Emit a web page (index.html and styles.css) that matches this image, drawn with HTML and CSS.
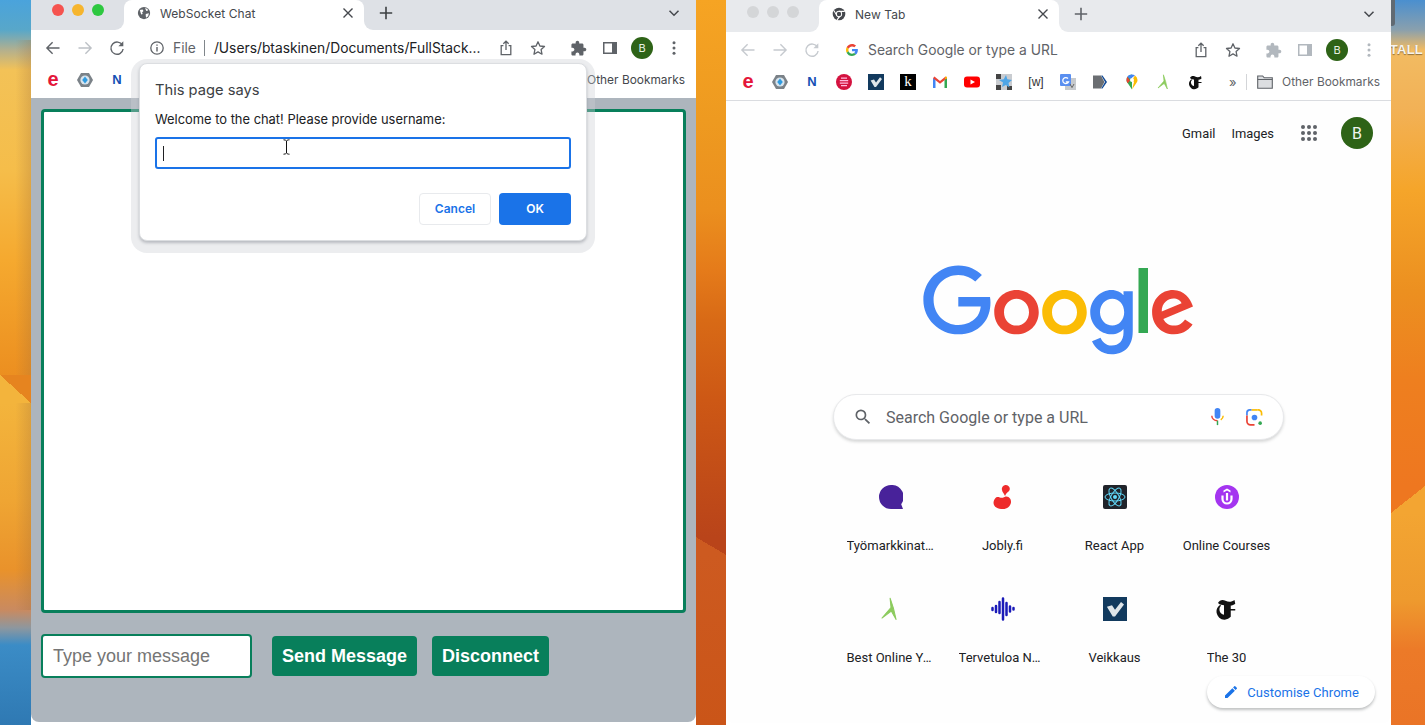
FILE: index.html
```html
<!DOCTYPE html>
<html lang="en">
<head>
<meta charset="utf-8">
<title>WebSocket Chat</title>
<link rel="stylesheet" href="styles.css">
</head>
<body>
<svg class="defs" width="0" height="0" aria-hidden="true">
  <defs>
    <symbol id="i-back" viewBox="0 0 16 16"><path d="M14.5 8H2M7.6 2.3 1.9 8l5.7 5.7" fill="none" stroke="currentColor" stroke-width="1.4"/></symbol>
    <symbol id="i-fwd" viewBox="0 0 16 16"><path d="M1.5 8H14M8.4 2.3 14.1 8l-5.7 5.7" fill="none" stroke="currentColor" stroke-width="1.4"/></symbol>
    <symbol id="i-reload" viewBox="0 0 16 16"><path d="M13.4 5.2A6.1 6.1 0 1 0 14.1 9" fill="none" stroke="currentColor" stroke-width="1.4"/><path d="M14.3 1.3v4.9H9.4z" fill="currentColor"/></symbol>
    <symbol id="i-info" viewBox="0 0 16 16"><circle cx="8" cy="8" r="6.2" fill="none" stroke="currentColor" stroke-width="1.3"/><path d="M7.3 7h1.4v4.4H7.3zM7.3 4.4h1.4v1.4H7.3z" fill="currentColor"/></symbol>
    <symbol id="i-share" viewBox="0 0 16 16"><path d="M5.4 5.6H3.2v9h9.6v-9h-2.2M8 10V1.4M5.3 3.8 8 1.2l2.7 2.6" fill="none" stroke="currentColor" stroke-width="1.3"/></symbol>
    <symbol id="i-star" viewBox="0 0 16 16"><path d="m8 1.8 1.9 4.2 4.6.5-3.4 3.1.9 4.6L8 11.9l-4 2.3.9-4.6-3.4-3.1 4.6-.5z" fill="none" stroke="currentColor" stroke-width="1.3" stroke-linejoin="round"/></symbol>
    <symbol id="i-puzzle" viewBox="0 0 24 24"><path fill="currentColor" d="M20.5 11H19V7c0-1.1-.9-2-2-2h-4V3.5C13 2.12 11.88 1 10.5 1S8 2.12 8 3.5V5H4c-1.1 0-1.99.9-1.99 2v3.8H3.5c1.49 0 2.7 1.21 2.7 2.7s-1.21 2.7-2.7 2.7H2V20c0 1.1.9 2 2 2h3.8v-1.5c0-1.49 1.21-2.7 2.7-2.7 1.49 0 2.7 1.21 2.7 2.7V22H17c1.1 0 2-.9 2-2v-4h1.5c1.38 0 2.5-1.12 2.5-2.5S21.88 11 20.5 11z"/></symbol>
    <symbol id="i-panel" viewBox="0 0 16 16"><path fill="currentColor" fill-rule="evenodd" d="M1 2h14v12H1zm1.5 1.5v9H10v-9z"/></symbol>
    <symbol id="i-dots" viewBox="0 0 16 16"><circle cx="8" cy="2.8" r="1.5" fill="currentColor"/><circle cx="8" cy="8" r="1.5" fill="currentColor"/><circle cx="8" cy="13.2" r="1.5" fill="currentColor"/></symbol>
    <symbol id="i-close" viewBox="0 0 12 12"><path d="m1.5 1.5 9 9m0-9-9 9" fill="none" stroke="currentColor" stroke-width="1.4"/></symbol>
    <symbol id="i-plus" viewBox="0 0 14 14"><path d="M7 .8v12.4M.8 7h12.4" fill="none" stroke="currentColor" stroke-width="1.6"/></symbol>
    <symbol id="i-chev" viewBox="0 0 12 12"><path d="m1.5 3.8 4.5 4.5 4.5-4.5" fill="none" stroke="currentColor" stroke-width="1.5"/></symbol>
    <symbol id="i-check" viewBox="0 0 16 16"><rect width="16" height="16" fill="#123a5e"/><path d="M2.600 6.500 6 5.500 8 8.500 12 3.300 14 5 8 13H6.500z" fill="#dfe6ea"/></symbol>
    <symbol id="i-yoga" viewBox="0 0 16 16"><path d="M7.4.8 8 7 2 14l6.2-4.6L11.4 15 9.6 7.4z" fill="#8ccb5e" stroke="#8ccb5e" stroke-width=".7" stroke-linejoin="round"/></symbol>
    <symbol id="i-nyt" viewBox="0 0 16 16"><path fill="#111" d="M2 4c1-2 3-2.500 5-1.500s4 1 6-.5l.5 2.500c-1 .8-2 1.200-3 1.200v7.500c-1 1-2.500 1.800-4 2-2.500.2-5-2-5.500-5-.2-2 .8-3.800 2.500-5l.5.7c-.8.8-1.200 1.800-1 3 .2 1.500 1.500 3 3 3V5.500C5 5.300 3.200 5.500 2 4z"/><path fill="#111" d="M10 8h3.500v1H10z"/></symbol>
    <symbol id="i-gicon" viewBox="0 0 48 48"><path fill="#EA4335" d="M24 9.5c3.5 0 6.7 1.2 9.2 3.6l6.9-6.9C35.9 2.4 30.5 0 24 0 14.6 0 6.5 5.4 2.6 13.2l8 6.2C12.4 13.7 17.700 9.5 24 9.500z"/><path fill="#4285F4" d="M47.500 24.500c0-1.600-.1-3.100-.4-4.500H24v9h12.900c-.6 3-2.200 5.500-4.800 7.200l7.700 6c4.500-4.200 7.700-10.300 7.700-17.700z"/><path fill="#FBBC05" d="M10.500 28.600c-.5-1.400-.8-3-.8-4.600s.3-3.200.8-4.600l-8-6.200C.9 16.500 0 20.100 0 24s.9 7.500 2.600 10.800z"/><path fill="#34A853" d="M24 48c6.500 0 11.900-2.100 15.900-5.800l-7.700-6c-2.200 1.500-4.900 2.300-8.200 2.300-6.300 0-11.600-4.200-13.500-9.900l-8 6.200C6.500 42.600 14.600 48 24 48z"/></symbol>
  </defs>
</svg>

<main class="desktop">
  <div class="desk-label">STALL</div>
  <div class="desk-edge"></div>

  <section class="window window-chat">
    <header class="tabstrip">
      <div class="strip-lead">
        <span class="light light-red"></span><span class="light light-yellow"></span><span class="light light-green"></span>
      </div>
      <div class="tab">
        <svg class="tab-icon" viewBox="0 0 16 16"><circle cx="8" cy="8" r="7" fill="#5f6368"/><path d="M3.200 4.600 6.400 4l1 1.800-1.600 1.600.8 1.800-1.800.4zM9.200 2.200 12 3.400l.6 1.800-2 .4zM10 9l3.600-.6-.8 3-2 2-.8-1.600z" fill="#fff"/></svg>
        <span class="tab-title">WebSocket Chat</span>
        <svg class="tab-close"><use href="#i-close"/></svg>
      </div>
      <div class="strip-rest">
        <button class="tb-btn"><svg class="ic-14"><use href="#i-plus"/></svg></button>
        <button class="tb-btn chev"><svg class="ic-12"><use href="#i-chev"/></svg></button>
      </div>
    </header>
    <div class="toolbar">
      <button class="tb-btn"><svg class="ic-16"><use href="#i-back"/></svg></button>
      <button class="tb-btn dim"><svg class="ic-16"><use href="#i-fwd"/></svg></button>
      <button class="tb-btn"><svg class="ic-16"><use href="#i-reload"/></svg></button>
      <div class="omnibox">
        <svg class="ic-16 omni-lead"><use href="#i-info"/></svg>
        <span class="omni-file">File</span>
        <span class="omni-sep"></span>
        <span class="omni-url">/Users/btaskinen/Documents/FullStack...</span>
        <button class="tb-btn"><svg class="ic-16"><use href="#i-share"/></svg></button>
        <button class="tb-btn"><svg class="ic-16"><use href="#i-star"/></svg></button>
      </div>
      <button class="tb-btn"><svg class="ic-17"><use href="#i-puzzle"/></svg></button>
      <button class="tb-btn"><svg class="ic-16"><use href="#i-panel"/></svg></button>
      <button class="tb-btn"><span class="avatar-sm">B</span></button>
      <button class="tb-btn"><svg class="ic-16"><use href="#i-dots"/></svg></button>
    </div>
    <nav class="bookmarks">
      <span class="fav"><span class="fav-e">e</span></span>
      <span class="fav"><svg class="fav-svg" viewBox="0 0 16 16"><path d="M4 1h8l4 7-4 7H4L0 8z" fill="#7b8288"/><circle cx="8" cy="8" r="4.600" fill="#d7e4ee"/><path d="M8 4.500 10.800 8 8 11.500 5.200 8z" fill="#2f9be0"/></svg></span>
      <span class="fav"><span class="fav-n">N</span></span>
      <span class="bm-other chat-other">Other Bookmarks</span>
    </nav>
    <div class="chat-page">
      <div class="chat-log"></div>
      <form class="chat-form">
        <div class="chat-input">Type your message</div>
        <button type="button" class="chat-btn">Send Message</button>
        <button type="button" class="chat-btn">Disconnect</button>
      </form>
    </div>
    <div class="prompt">
      <div class="prompt-title">This page says</div>
      <div class="prompt-msg">Welcome to the chat! Please provide username:</div>
      <div class="prompt-input"><span class="caret"></span></div>
      <div class="prompt-actions">
        <button class="prompt-cancel">Cancel</button>
        <button class="prompt-ok">OK</button>
      </div>
      <svg class="ibeam" viewBox="0 0 9 16"><path d="M1.500 .8c1.500 0 2.500.4 3 1.200.5-.8 1.500-1.200 3-1.200M4.500 2v12M1.500 15.200c1.500 0 2.500-.4 3-1.200.5.8 1.500 1.200 3 1.200" fill="none" stroke="#111" stroke-width="1"/></svg>
    </div>
  </section>

  <section class="window window-ntp">
    <header class="tabstrip tall">
      <div class="strip-lead">
        <span class="light"></span><span class="light"></span><span class="light"></span>
      </div>
      <div class="tab">
        <svg class="tab-icon" viewBox="0 0 16 16"><circle cx="8" cy="8" r="7.200" fill="#45484d"/><circle cx="8" cy="8" r="3.600" fill="#fff"/><circle cx="8" cy="8" r="2.500" fill="#45484d"/><path d="M8 4.400h6.400l.3 1.200H8zM4.900 9.800 1.600 4.300l1-.7 3.300 5.600zM9.200 11.300l-3.200 4.200-1.100-.5 3.200-5z" fill="#fff"/></svg>
        <span class="tab-title">New Tab</span>
        <svg class="tab-close"><use href="#i-close"/></svg>
      </div>
      <div class="strip-rest">
        <button class="tb-btn"><svg class="ic-14"><use href="#i-plus"/></svg></button>
        <button class="tb-btn chev"><svg class="ic-12"><use href="#i-chev"/></svg></button>
      </div>
    </header>
    <div class="toolbar">
      <button class="tb-btn faint"><svg class="ic-16"><use href="#i-back"/></svg></button>
      <button class="tb-btn faint"><svg class="ic-16"><use href="#i-fwd"/></svg></button>
      <button class="tb-btn faint"><svg class="ic-16"><use href="#i-reload"/></svg></button>
      <div class="omnibox">
        <svg class="omni-g"><use href="#i-gicon"/></svg>
        <span class="omni-search">Search Google or type a URL</span>
        <button class="tb-btn"><svg class="ic-16"><use href="#i-share"/></svg></button>
        <button class="tb-btn"><svg class="ic-16"><use href="#i-star"/></svg></button>
      </div>
      <button class="tb-btn muted"><svg class="ic-17"><use href="#i-puzzle"/></svg></button>
      <button class="tb-btn muted"><svg class="ic-16"><use href="#i-panel"/></svg></button>
      <button class="tb-btn"><span class="avatar-sm">B</span></button>
      <button class="tb-btn muted"><svg class="ic-16"><use href="#i-dots"/></svg></button>
    </div>
    <nav class="bookmarks ruled">
      <span class="fav"><span class="fav-e">e</span></span>
      <span class="fav"><svg class="fav-svg" viewBox="0 0 16 16"><path d="M4 1h8l4 7-4 7H4L0 8z" fill="#7b8288"/><circle cx="8" cy="8" r="4.600" fill="#d7e4ee"/><path d="M8 4.500 10.800 8 8 11.500 5.200 8z" fill="#2f9be0"/></svg></span>
      <span class="fav"><span class="fav-n">N</span></span>
      <span class="fav"><svg class="fav-svg" viewBox="0 0 16 16"><circle cx="8" cy="8" r="8" fill="#d4123f"/><path d="M5 3.500h6v1.300H5zM3.800 6h8.400v1.300H3.800zM3.800 8.500h8.400v1.300H3.800zM5 11h6v1.300H5z" fill="#fbd"/></svg></span>
      <span class="fav"><svg class="fav-svg"><use href="#i-check"/></svg></span>
      <span class="fav"><span class="fav-k">k</span></span>
      <span class="fav"><svg class="fav-svg" viewBox="0 0 16 16"><path d="M1 14V4l2.500 1.500V14z" fill="#4285f4"/><path d="M15 14V4l-2.500 1.500V14z" fill="#34a853"/><path d="M1 4.200 2.400 2.600 8 7l5.600-4.400L15 4.200 8 9.800z" fill="#ea4335"/><path d="M12.500 5.500 15 4.200V2.800l-1.400-.2z" fill="#fbbc05"/></svg></span>
      <span class="fav"><svg class="fav-svg" viewBox="0 0 16 16"><rect y="2.500" width="16" height="11" rx="3" fill="#f00"/><path d="m6.500 5.500 4.500 2.500-4.500 2.500z" fill="#fff"/></svg></span>
      <span class="fav"><svg class="fav-svg" viewBox="0 0 16 16"><rect width="16" height="16" fill="#c9ccd0"/><path d="M0 0h5v5H0zM0 11h5v5H0zM11 12h5v4h-5z" fill="#444"/><path d="m10 1 1.300 4.200L16 6l-3.500 3 1 4.500-3.700-2.400L6 13l1-4.500L3 6l4.800-.8z" fill="#4ea5e6"/></svg></span>
      <span class="fav"><span class="fav-w">[w]</span></span>
      <span class="fav"><svg class="fav-svg" viewBox="0 0 16 16"><rect x="5" y="4" width="11" height="12" fill="#c7cacd"/><rect width="11" height="12" rx="1" fill="#5a8ff0"/><path d="M8 4.500a3 3 0 1 0 .5 3.400H5.800" fill="none" stroke="#fff" stroke-width="1.300"/><path d="m10 10 2 3.600 2-3.600" fill="none" stroke="#666"/></svg></span>
      <span class="fav"><svg class="fav-svg" viewBox="0 0 16 16"><path d="M1 1.500h8l3.400 6.500L9 14.500H1z" fill="#6b6e72"/><path d="m10.500 1.500 4.500 6.500-4.500 6.500h-1.300L13 8 9.200 1.500z" fill="#114a96"/></svg></span>
      <span class="fav"><svg class="fav-svg" viewBox="0 0 16 16"><path d="M8 .5A5.500 5.500 0 0 0 2.500 6c0 1.400.5 2.300 1.300 3.300L8 15.500z" fill="#34a853"/><path d="M8 .5C6 .5 4.400 1.300 3.400 2.800L6 5l5-3.500A5.500 5.500 0 0 0 8 .5z" fill="#4285f4"/><path d="M2.500 6c0 1.400.5 2.300 1.300 3.300L6 6.500 3.400 2.800A5.500 5.500 0 0 0 2.500 6z" fill="#ea4335"/><path d="M11 1.500 8 6l2 2-2 7.500 4.200-6.200c.8-1 1.300-1.900 1.300-3.300a5.500 5.500 0 0 0-2.500-4.500z" fill="#fbbc05"/><circle cx="8" cy="6" r="2" fill="#fff"/></svg></span>
      <span class="fav"><svg class="fav-svg"><use href="#i-yoga"/></svg></span>
      <span class="fav"><svg class="fav-svg"><use href="#i-nyt"/></svg></span>
      <span class="bm-more">»</span>
      <span class="bm-sep"></span>
      <svg class="bm-folder" viewBox="0 0 16 14"><path d="M.7 1h5l1.500 1.800h8.100v10.400H.7z" fill="#dcdee1" stroke="#5f6368" stroke-width="1.100"/><path d="M.7 4.500h14.600" stroke="#5f6368"/></svg>
      <span class="bm-other">Other Bookmarks</span>
    </nav>
    <div class="ntp-page">
      <div class="ntp-top">
        <span class="ntp-link">Gmail</span>
        <span class="ntp-link">Images</span>
        <svg class="ntp-apps" viewBox="0 0 16 16"><g fill="#5f6368"><circle cx="2" cy="2" r="2"/><circle cx="8" cy="2" r="2"/><circle cx="14" cy="2" r="2"/><circle cx="2" cy="8" r="2"/><circle cx="8" cy="8" r="2"/><circle cx="14" cy="8" r="2"/><circle cx="2" cy="14" r="2"/><circle cx="8" cy="14" r="2"/><circle cx="14" cy="14" r="2"/></g></svg>
        <span class="avatar-lg">B</span>
      </div>
      <svg class="google-logo" viewBox="0 0 272 92" role="img" aria-label="Google">
        <path fill="#EA4335" d="M115.750 47.180c0 12.770-9.990 22.180-22.250 22.180s-22.250-9.410-22.250-22.180C71.250 34.320 81.240 25 93.500 25s22.250 9.320 22.250 22.180zm-9.740 0c0-7.980-5.790-13.440-12.510-13.440S80.990 39.200 80.990 47.180c0 7.900 5.790 13.440 12.510 13.440s12.510-5.550 12.510-13.440z"/>
        <path fill="#FBBC05" d="M163.750 47.180c0 12.770-9.990 22.180-22.250 22.180s-22.250-9.410-22.250-22.180c0-12.850 9.990-22.180 22.250-22.180s22.250 9.320 22.250 22.180zm-9.740 0c0-7.980-5.790-13.440-12.510-13.440s-12.510 5.460-12.510 13.440c0 7.900 5.790 13.440 12.510 13.440s12.510-5.550 12.510-13.440z"/>
        <path fill="#4285F4" d="M209.750 26.340v39.820c0 16.380-9.660 23.070-21.080 23.070-10.750 0-17.220-7.190-19.660-13.070l8.480-3.530c1.510 3.610 5.210 7.870 11.170 7.870 7.310 0 11.840-4.510 11.840-13v-3.190h-.34c-2.180 2.690-6.380 5.040-11.680 5.040-11.090 0-21.250-9.660-21.250-22.090 0-12.520 10.160-22.260 21.250-22.260 5.290 0 9.490 2.350 11.680 4.960h.34v-3.610h9.250zm-8.560 20.920c0-7.810-5.210-13.520-11.840-13.520-6.720 0-12.350 5.710-12.350 13.520 0 7.730 5.630 13.360 12.350 13.360 6.630 0 11.840-5.630 11.840-13.360z"/>
        <path fill="#34A853" d="M225 3v65h-9.500V3h9.500z"/>
        <path fill="#EA4335" d="M262.020 54.480l7.560 5.040c-2.440 3.610-8.320 9.830-18.480 9.830-12.600 0-22.010-9.740-22.010-22.180 0-13.190 9.490-22.180 20.920-22.180 11.510 0 17.140 9.160 18.980 14.110l1.010 2.520-29.650 12.280c2.270 4.450 5.800 6.720 10.750 6.720 4.960 0 8.400-2.440 10.920-6.140zm-23.270-7.980l19.820-8.230c-1.090-2.770-4.370-4.700-8.230-4.700-4.950 0-11.840 4.370-11.590 12.930z"/>
        <path fill="#4285F4" d="M35.290 41.410V32H67c.31 1.640.47 3.580.47 5.680 0 7.060-1.930 15.790-8.150 22.010-6.050 6.300-13.780 9.660-24.020 9.660C16.320 69.350.36 53.890.36 34.910.36 15.930 16.320.47 35.300.47c10.500 0 17.980 4.120 23.600 9.490l-6.640 6.640c-4.030-3.780-9.490-6.720-16.970-6.720-13.860 0-24.700 11.170-24.700 25.030 0 13.860 10.840 25.030 24.700 25.030 8.990 0 14.110-3.610 17.390-6.890 2.660-2.660 4.410-6.460 5.100-11.650l-22.490.01z"/>
      </svg>
      <div class="ntp-search">
        <svg class="ntp-search-ic" viewBox="0 0 24 24"><path fill="#5f6368" d="M15.500 14h-.79l-.28-.27A6.470 6.470 0 0 0 16 9.500 6.500 6.500 0 1 0 9.500 16c1.610 0 3.090-.59 4.230-1.570l.27.28v.79l5 4.990L20.490 19l-4.990-5zm-6 0C7.010 14 5 11.990 5 9.500S7.010 5 9.500 5 14 7.010 14 9.500 11.990 14 9.500 14z"/></svg>
        <span class="ntp-search-text">Search Google or type a URL</span>
        <svg class="ntp-mic" viewBox="0 0 16 22"><rect x="4.500" y="0" width="7" height="13" rx="3.500" fill="#4285f4"/><path d="M1 9.500c0 3.500 3 6 7 6" fill="none" stroke="#ea4335" stroke-width="1.800"/><path d="M15 9.500c0 2-1 3.800-3 5" fill="none" stroke="#fbbc05" stroke-width="1.800"/><path d="M8 15.500V21" stroke="#34a853" stroke-width="1.800"/></svg>
        <svg class="ntp-lens" viewBox="0 0 18 18"><path d="M1 7V4a3 3 0 0 1 3-3h2" fill="none" stroke="#4285f4" stroke-width="1.800"/><path d="M6 1h6" stroke="#fbbc05" stroke-width="1.800" fill="none"/><path d="M12 1h1a3.500 3.500 0 0 1 3.500 3.500V7" fill="none" stroke="#fbbc05" stroke-width="1.800"/><path d="M1 7v6a3.800 3.800 0 0 0 3.800 3.800H9" fill="none" stroke="#ea4335" stroke-width="1.800"/><circle cx="9" cy="9" r="3" fill="#4285f4"/><circle cx="15" cy="15" r="1.900" fill="#34a853"/></svg>
      </div>
      <div class="tiles">
        <div class="tile">
          <svg class="tile-ic" viewBox="0 0 24 24"><path d="M12 0a12 12 0 1 0 0 24h12l-1.800-4.800A12 12 0 0 0 12 0z" fill="#48229a"/></svg>
          <span class="tile-label">Työmarkkinatori</span>
        </div>
        <div class="tile">
          <svg class="tile-ic" viewBox="0 0 24 24"><path d="M15 0a3.800 3.800 0 0 1 3.500 5.200c-.8 1.700-3.500 2.600-4.500 5.800-1-2.700-2.800-3.700-3-6A3.900 3.900 0 0 1 15 0z" fill="#ee2b2b"/><path d="M5 12.500c2.500-1.200 3.500.3 6 .3 1.400 0 2.400-.8 3.500-1.300 3.600-.6 6 2.800 5.500 6-.5 3.800-4 6.500-8 6.500-5 0-9.500-2-9.500-6.300 0-2.200 1.300-4 2.500-5.200z" fill="#ee2b2b"/></svg>
          <span class="tile-label">Jobly.fi</span>
        </div>
        <div class="tile">
          <svg class="tile-ic" viewBox="0 0 24 24"><rect width="24" height="24" rx="2" fill="#20232a"/><g fill="none" stroke="#61dafb" stroke-width="1"><ellipse cx="12" cy="12" rx="10" ry="4"/><ellipse cx="12" cy="12" rx="10" ry="4" transform="rotate(60 12 12)"/><ellipse cx="12" cy="12" rx="10" ry="4" transform="rotate(120 12 12)"/></g><circle cx="12" cy="12" r="2" fill="#61dafb"/></svg>
          <span class="tile-label">React App</span>
        </div>
        <div class="tile">
          <svg class="tile-ic" viewBox="0 0 24 24"><circle cx="12" cy="12" r="12" fill="#a435f0"/><path d="M7.500 10.500V14a4.500 4.500 0 0 0 9 0v-3.500" fill="none" stroke="#fff" stroke-width="2.200"/><path d="m12 3.500 3.500 2v2L12 5.500l-3.500 2v-2z" fill="#fff"/><path d="M12 8v7.500" stroke="#fff" stroke-width="2.200"/></svg>
          <span class="tile-label">Online Courses</span>
        </div>
        <div class="tile">
          <svg class="tile-ic"><use href="#i-yoga"/></svg>
          <span class="tile-label">Best Online Yoga Classes</span>
        </div>
        <div class="tile">
          <svg class="tile-ic" viewBox="0 0 24 24"><g stroke="#1a1ab8" stroke-width="2.500" stroke-linecap="round"><path d="M1.500 11v2M5 9v6M8.500 5v11M12 1.500v21M15.500 6v12M19 9.500v5M22.500 11v1.500"/></g></svg>
          <span class="tile-label">Tervetuloa Nettiradioon</span>
        </div>
        <div class="tile">
          <svg class="tile-ic"><use href="#i-check"/></svg>
          <span class="tile-label">Veikkaus</span>
        </div>
        <div class="tile">
          <svg class="tile-ic"><use href="#i-nyt"/></svg>
          <span class="tile-label">The 30</span>
        </div>
      </div>
      <div class="customise">
        <svg class="customise-ic" viewBox="0 0 24 24"><path fill="#1a73e8" d="M3 17.250V21h3.750L17.810 9.940l-3.750-3.750L3 17.250zM20.710 7.040a1 1 0 0 0 0-1.410l-2.340-2.340a1 1 0 0 0-1.410 0l-1.830 1.830 3.750 3.750 1.830-1.830z"/></svg>
        <span>Customise Chrome</span>
      </div>
    </div>
  </section>
</main>
</body>
</html>
```

FILE: styles.css
```css
* { box-sizing: border-box; }

html, body {
  margin: 0;
  height: 100%;
  overflow: hidden;
}

button {
  font: inherit;
  border: 0;
  padding: 0;
  background: none;
}

.defs { position: absolute; }

.desktop {
  position: relative;
  width: 1425px;
  height: 725px;
  overflow: hidden;
  font-family: Inter, "Liberation Sans", sans-serif;
  background:
    linear-gradient(to bottom left, #e6841f 50%, #f3b43c 50%) 0 375px / 31px 28px no-repeat,
    linear-gradient(to bottom left, #b9441a 50%, #cd5a20 50%) 696px 537px / 30px 18px no-repeat,
    linear-gradient(to bottom right, #ee7720 50%, #f3a532 50%) 1391px 486px / 34px 27px no-repeat,
    linear-gradient(90deg, rgba(160, 110, 60, 0) 50%, rgba(160, 110, 60, .28) 100%) 0 40px / 31px 570px no-repeat,
    linear-gradient(180deg, #4aa3dc 0, #58a7c9 30px, #b3b08e 50px, #f3c257 70px, #f5bd4a 170px, #f5a92f 260px, #ec8f20 375px, #f3b43c 403px, #efa533 500px, #e9922b 570px, #c98a60 610px, #8d979f 628px, #3b8cc6 645px, #2f79b3 725px) 0 0 / 31px 100% no-repeat,
    linear-gradient(180deg, #f6a423 0, #ee9a20 120px, #eb8f1e 210px, #e57b1a 270px, #d86a16 320px, #cd5815 400px, #b9441a 537px, #cd5a20 555px, #ca5518 725px) 696px 0 / 30px 100% no-repeat,
    linear-gradient(180deg, #4a8fcf 0, #8aa0ad 30px, #f2bb62 50px, #f2b156 110px, #f5a52a 190px, #ec9020 290px, #ee7f1f 380px, #ee7720 486px, #f3a532 513px, #ee9a2e 600px, #ec7a28 650px, #ea7426 725px) 1391px 0 / 34px 100% no-repeat;
}

.desk-label {
  position: absolute;
  left: 1381px;
  top: 42px;
  font: 700 13px/16px "Liberation Sans", sans-serif;
  letter-spacing: .2px;
  color: #f6f3ee;
  text-shadow: 0 1px 1px rgba(0, 0, 0, .4);
}

.desk-edge {
  position: absolute;
  left: 1391px;
  top: 0;
  width: 4px;
  height: 26px;
  background: #616a72;
  border-radius: 0 0 3px 0;
}

.window {
  position: absolute;
  top: 0;
  width: 665px;
  display: flex;
  flex-direction: column;
  overflow: hidden;
  background: #fff;
  border-radius: 0 0 8px 8px;
}

.window-chat { left: 31px; height: 722px; }
.window-ntp { left: 726px; height: 723px; }

/* Tab strip */
.tabstrip {
  --strip-color: #dee1e6;
  flex: none;
  display: flex;
  height: 30px;
  background: linear-gradient(var(--strip-color) 50%, #fff 50%);
}

.tabstrip.tall {
  --strip-color: #e8eaed;
  height: 32px;
}

.strip-lead {
  flex: none;
  width: 93px;
  display: flex;
  gap: 8px;
  padding: 4px 0 0 21px;
  background: var(--strip-color);
  border-bottom-right-radius: 9px;
}

.tall .strip-lead { padding-top: 6px; }

.light {
  width: 12px;
  height: 12px;
  border-radius: 50%;
  background: #d4d6d8;
}

.light-red { background: #f5534f; }
.light-yellow { background: #f6b52e; }
.light-green { background: #2dc840; }

.tab {
  flex: none;
  width: 240px;
  display: flex;
  align-items: center;
  gap: 9px;
  padding: 0 10px 4px 13px;
  background: #fff;
  border-radius: 8px 8px 0 0;
  font-size: 12px;
  letter-spacing: .08px;
  color: #45484d;
}

.tab-icon { flex: none; width: 14px; height: 14px; }
.tab-title { flex: 1; }
.tab-close { flex: none; width: 12px; height: 12px; color: #45484d; }

.strip-rest {
  flex: 1;
  display: flex;
  justify-content: space-between;
  align-items: center;
  padding: 0 6px 4px;
  background: var(--strip-color);
  border-bottom-left-radius: 9px;
}

/* Toolbar */
.toolbar {
  flex: none;
  display: flex;
  align-items: center;
  height: 36px;
  padding: 0 6px;
  background: #fff;
}

.tb-btn {
  flex: none;
  width: 32px;
  height: 28px;
  display: flex;
  align-items: center;
  justify-content: center;
  color: #5f6368;
}

.tabstrip .tb-btn { color: #3c4043; }
.tall .tb-btn { color: #5f6368; }
.tabstrip .chev { color: #45484d; }
.tb-btn.dim { color: #bdc1c6; }
.tb-btn.faint { color: #c6cacf; }
.tb-btn.muted { color: #b2b8be; }

.ic-12 { width: 12px; height: 12px; }
.ic-14 { width: 14px; height: 14px; }
.ic-16 { width: 16px; height: 16px; }
.ic-17 { width: 17px; height: 17px; }

.omnibox {
  flex: 1;
  min-width: 0;
  display: flex;
  align-items: center;
  margin-right: 8px;
  padding-left: 16px;
}

.omni-lead { flex: none; color: #5f6368; }

.omni-g {
  flex: none;
  width: 12px;
  height: 12px;
  margin: 0 2px;
}

.omni-file {
  margin-left: 8px;
  padding-bottom: 1px;
  font-size: 13.8px;
  color: #5f6368;
}

.omni-sep {
  width: 1px;
  height: 16px;
  margin: 0 9px 0 8px;
  background: #80868b;
}

.omni-url {
  flex: 1;
  padding-bottom: 1px;
  white-space: nowrap;
  font-size: 13.8px;
  color: #202124;
}

.omni-search {
  flex: 1;
  margin-left: 8px;
  padding-bottom: 1px;
  white-space: nowrap;
  font-size: 13.85px;
  color: #5f6368;
}

.avatar-sm {
  width: 22px;
  height: 22px;
  display: flex;
  align-items: center;
  justify-content: center;
  border-radius: 50%;
  background: #2e6317;
  color: #e8f0e2;
  font-size: 11px;
}

/* Bookmarks */
.bookmarks {
  flex: none;
  display: flex;
  align-items: center;
  height: 32px;
  padding: 0 11px 4px 6px;
  background: #fff;
}

.bookmarks.ruled {
  height: 33px;
  border-bottom: 1px solid #dadce0;
}

.fav {
  flex: none;
  width: 32px;
  height: 16px;
  display: flex;
  align-items: center;
  justify-content: center;
}

.fav-svg { width: 16px; height: 16px; }

.fav-e {
  font: 700 20px/16px "Liberation Sans", sans-serif;
  color: #e4163a;
  position: relative;
  top: -1px;
}

.fav-n {
  font: 900 13px/16px "Liberation Sans", sans-serif;
  color: #1450b4;
}

.fav-k {
  width: 16px;
  height: 16px;
  background: #000;
  color: #fff;
  font: 400 15px/15px "Liberation Serif", serif;
  text-align: center;
}

.fav-w {
  font: 400 12px/16px "Liberation Sans", sans-serif;
  color: #333;
}

.bm-more {
  margin-left: 17px;
  width: 8px;
  font-size: 13px;
  color: #5f6368;
}

.bm-sep {
  width: 1px;
  height: 16px;
  margin: 0 11px 0 9px;
  background: #d3d5d8;
}

.bm-folder {
  flex: none;
  width: 16px;
  height: 14px;
  margin-right: 9px;
}

.bm-other {
  padding-bottom: 2px;
  white-space: nowrap;
  font-size: 11.9px;
  color: #5f6368;
}

.chat-other {
  margin-left: auto;
  color: #45484d;
}

/* Chat page */
.chat-page {
  flex: 1;
  display: flex;
  flex-direction: column;
  padding: 11px 10px 0;
  background: #adb5bd;
}

.chat-log {
  flex: none;
  height: 504px;
  background: #fff;
  border: 3px solid #087f5b;
  border-radius: 4px;
}

.chat-form {
  display: flex;
  align-items: center;
  gap: 15px;
  margin: 21px 0 0;
}

.chat-input {
  width: 211px;
  height: 44px;
  margin-right: 5px;
  padding: 0 10px;
  display: flex;
  align-items: center;
  background: #fff;
  border: 2px solid #087f5b;
  border-radius: 4px;
  font: 18px "Liberation Sans", sans-serif;
  color: #757575;
}

.chat-btn {
  height: 40px;
  padding: 0 10px;
  background: #087f5b;
  border-radius: 4px;
  font: 700 18px "Liberation Sans", sans-serif;
  color: #fff;
}

/* Prompt dialog */
.prompt {
  position: absolute;
  left: 108px;
  top: 63px;
  width: 448px;
  height: 178px;
  display: flex;
  flex-direction: column;
  padding: 16px 15px 0;
  background: #fff;
  border: 1px solid #dcdee1;
  border-radius: 8px;
  box-shadow:
    0 2px 3px rgba(110, 115, 125, .4),
    0 4px 0 8px rgba(205, 208, 214, .38);
  color: #3c4043;
}

.prompt-title { font-size: 14.7px; line-height: 20px; }
.prompt-msg { margin-top: 11px; font-size: 12.9px; line-height: 18px; color: #202124; }

.prompt-input {
  margin-top: 8px;
  height: 32px;
  display: flex;
  align-items: center;
  padding-left: 6px;
  border: 2px solid #1a73e8;
  border-radius: 3px;
}

.caret { width: 1px; height: 15px; background: #202124; }

.prompt-actions {
  display: flex;
  justify-content: flex-end;
  gap: 8px;
  margin-top: 24px;
}

.prompt-cancel,
.prompt-ok {
  width: 72px;
  height: 32px;
  padding-bottom: 2px;
  border-radius: 4px;
  font-size: 12px;
  font-weight: 600;
}

.prompt-cancel {
  background: #fff;
  border: 1px solid #e8eaed;
  color: #1a73e8;
}

.prompt-ok { background: #1a73e8; color: #fff; }

.ibeam {
  position: absolute;
  left: 142px;
  top: 75px;
  width: 9px;
  height: 16px;
}

/* New tab page */
.ntp-page {
  position: relative;
  flex: 1;
  display: flex;
  flex-direction: column;
  align-items: center;
  background: #fefefe;
}

.ntp-top {
  align-self: stretch;
  display: flex;
  justify-content: flex-end;
  align-items: center;
  gap: 16px;
  height: 32px;
  margin-top: 16px;
  padding-right: 18px;
}

.ntp-link {
  font: 12.9px Roboto, sans-serif;
  color: #202124;
}

.ntp-apps {
  width: 16px;
  height: 16px;
  margin: 0 8px 0 11px;
}

.avatar-lg {
  width: 32px;
  height: 32px;
  display: flex;
  align-items: center;
  justify-content: center;
  border-radius: 50%;
  background: #2e6317;
  color: #f1f5ee;
  font: 16px Roboto, sans-serif;
}

.google-logo {
  flex: none;
  width: 272px;
  height: 92px;
  margin-top: 116px;
}

.ntp-search {
  flex: none;
  width: 451px;
  height: 46px;
  margin-top: 37px;
  display: flex;
  align-items: center;
  padding: 0 20px 0 19px;
  background: #fff;
  border: 1px solid #e8e9eb;
  border-radius: 23px;
  box-shadow: 0 2px 3px rgba(60, 64, 67, .2);
}

.ntp-search-ic { flex: none; width: 20px; height: 20px; }

.ntp-search-text {
  flex: 1;
  margin-left: 13px;
  font: 16px Roboto, sans-serif;
  color: #5f6368;
}

.ntp-mic { flex: none; width: 13px; height: 18px; }

.ntp-lens { flex: none; width: 17px; height: 17px; margin-left: 22px; }

.tiles {
  display: grid;
  grid-template-columns: repeat(4, 112px);
  grid-auto-rows: 112px;
  margin-top: 45px;
}

.tile {
  display: flex;
  flex-direction: column;
  align-items: center;
}

.tile-ic { flex: none; width: 24px; height: 24px; }

.tile-label {
  max-width: 88px;
  margin-top: 26.5px;
  overflow: hidden;
  white-space: nowrap;
  text-overflow: ellipsis;
  font: 13px/20px Roboto, sans-serif;
  color: #202124;
}

.customise {
  position: absolute;
  right: 16px;
  bottom: 15px;
  display: flex;
  align-items: center;
  gap: 8px;
  height: 32px;
  padding: 0 16px;
  background: #fff;
  border-radius: 16px;
  box-shadow: 0 2px 3px rgba(60, 64, 67, .32);
  font: 400 13px Roboto, sans-serif;
  letter-spacing: .05px;
  color: #1a73e8;
}

.customise-ic { width: 16px; height: 16px; }
```
